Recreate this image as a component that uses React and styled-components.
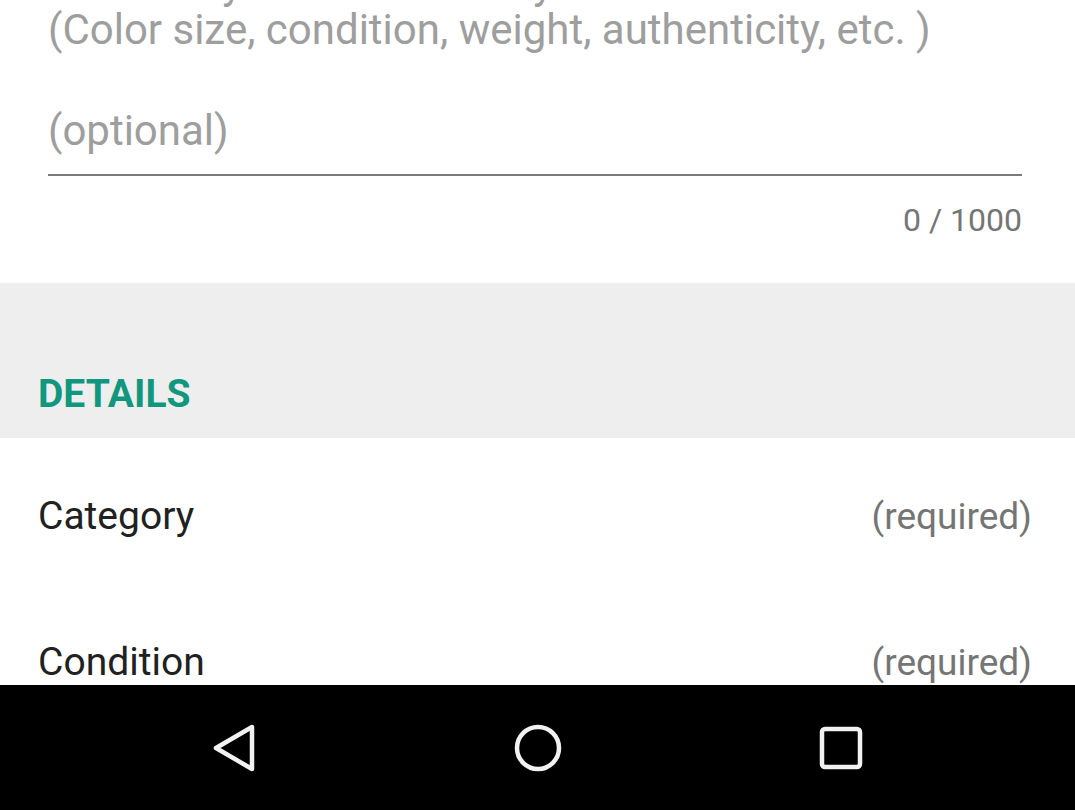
import React from 'react';
import styled, { createGlobalStyle } from 'styled-components';

const GlobalStyle = createGlobalStyle`
  html, body {
    margin: 0;
    padding: 0;
    background: #ffffff;
  }
  body {
    font-family: Roboto, "Noto Sans", "Liberation Sans", sans-serif;
  }
`;

const Screen = styled.div`
  display: flex;
  flex-direction: column;
  width: 1075px;
  height: 810px;
  overflow: hidden;
`;

const Content = styled.div`
  flex: 1;
  display: flex;
  flex-direction: column;
  overflow: hidden;
`;

const Field = styled.div`
  display: flex;
  flex-direction: column;
  flex-shrink: 0;
  height: 283px;
  box-sizing: border-box;
  padding: 0 53px 0 48px;
`;

// the previous line of the hint, scrolled off the top of the screen
const CutLine = styled.div`
  height: 8px;
  overflow: hidden;
  display: flex;
  align-items: flex-end;
  font-size: 42px;
  line-height: 48px;
  color: #9e9e9e;
  white-space: nowrap;
`;

const Hint = styled.div`
  margin-top: -2px;
  font-size: 42px;
  line-height: 48px;
  color: #9e9e9e;
  white-space: nowrap;
`;

const Input = styled.div`
  margin-top: 53px;
  padding-bottom: 19px;
  border-bottom: 2px solid #7a7a7a;
  font-size: 42px;
  line-height: 48px;
  color: #9e9e9e;
`;

const Counter = styled.div`
  margin-top: 26px;
  align-self: flex-end;
  font-size: 32px;
  line-height: 36px;
  color: #757575;
`;

const SectionHeader = styled.div`
  display: flex;
  align-items: flex-end;
  flex-shrink: 0;
  height: 155px;
  box-sizing: border-box;
  padding: 0 38px 24px;
  background: #eeeeee;
  color: #12977f;
  font-size: 39px;
  font-weight: 700;
  line-height: 40px;
`;

const Row = styled.div`
  display: flex;
  justify-content: space-between;
  align-items: center;
  flex-shrink: 0;
  height: 146px;
  padding: 10px 43px 0 38px;
  box-sizing: border-box;
`;

const Label = styled.span`
  font-size: 39px;
  color: #212121;
`;

const Required = styled.span`
  font-size: 37px;
  color: #757575;
`;

const NavBar = styled.div`
  display: flex;
  align-items: center;
  justify-content: center;
  gap: 243px;
  height: 125px;
  flex-shrink: 0;
  background: #000000;
`;

const NavButton = styled.div`
  display: flex;
  align-items: center;
  justify-content: center;
  width: 60px;
  height: 60px;
`;

const BackIcon = () => (
  <svg width="48" height="50" viewBox="0 0 48 50">
    <path
      d="M41 4 L41 46 L5 25 Z"
      fill="none"
      stroke="#f2f2f2"
      strokeWidth="4.5"
      strokeLinejoin="round"
    />
  </svg>
);

const HomeIcon = () => (
  <svg width="52" height="52" viewBox="0 0 52 52">
    <circle cx="26" cy="26" r="21" fill="none" stroke="#f2f2f2" strokeWidth="4.5" />
  </svg>
);

const RecentsIcon = () => (
  <svg width="48" height="48" viewBox="0 0 48 48">
    <rect
      x="5"
      y="5"
      width="38"
      height="38"
      rx="3"
      fill="none"
      stroke="#f2f2f2"
      strokeWidth="4.5"
    />
  </svg>
);

export default function App() {
  return (
    <>
      <GlobalStyle />
      <Screen>
        <Content>
          <Field>
            <CutLine>Describe your item and any flaws</CutLine>
            <Hint>(Color size, condition, weight, authenticity, etc. )</Hint>
            <Input>(optional)</Input>
            <Counter>0 / 1000</Counter>
          </Field>
          <SectionHeader>DETAILS</SectionHeader>
          <Row>
            <Label>Category</Label>
            <Required>(required)</Required>
          </Row>
          <Row>
            <Label>Condition</Label>
            <Required>(required)</Required>
          </Row>
        </Content>
        <NavBar>
          <NavButton>
            <BackIcon />
          </NavButton>
          <NavButton>
            <HomeIcon />
          </NavButton>
          <NavButton>
            <RecentsIcon />
          </NavButton>
        </NavBar>
      </Screen>
    </>
  );
}
